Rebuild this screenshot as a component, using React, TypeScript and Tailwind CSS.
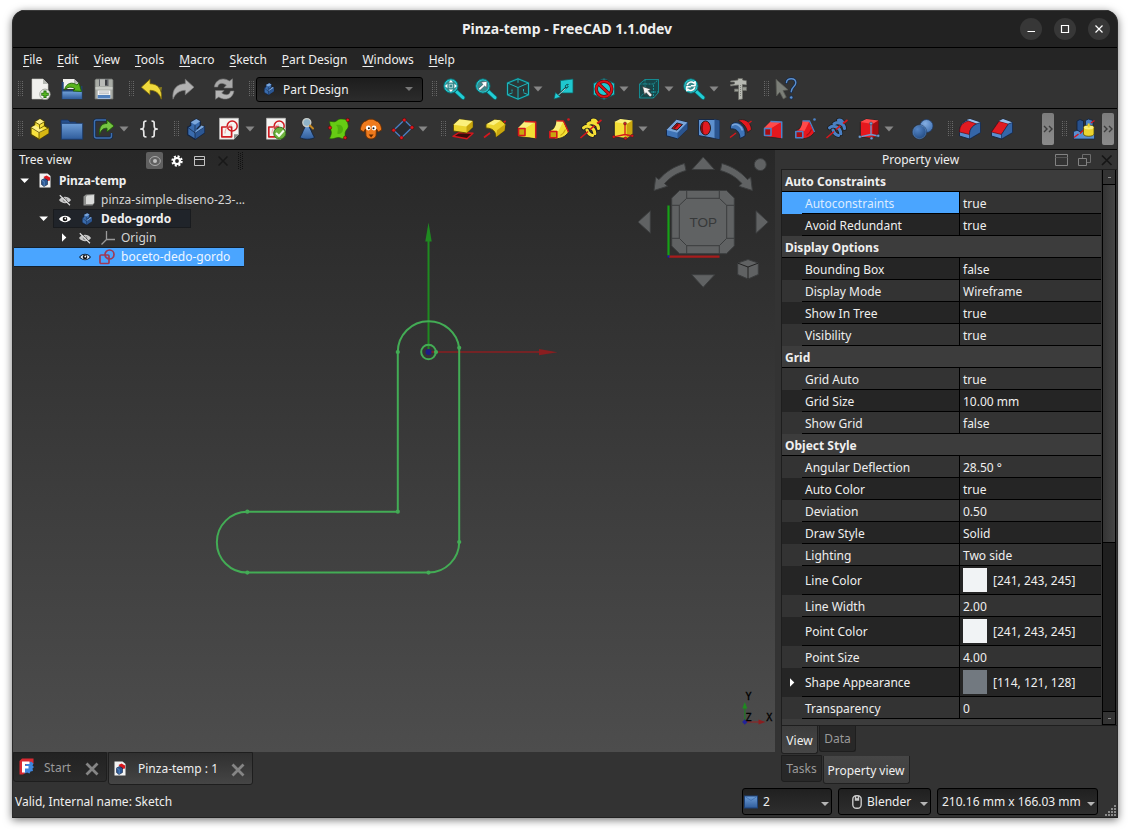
import type { ReactNode } from "react";

const K = "#12233f";

function Svg({ children, size = "size-6" }: { children: ReactNode; size?: string }) {
  return (
    <svg viewBox="0 0 24 24" className={`${size} block shrink-0`} fill="none" strokeLinejoin="round">
      {children}
    </svg>
  );
}

/* ---------- file and edit icons ---------- */

const NewDoc = () => (
  <Svg>
    <path d="M4 2h11l5 5v15H4z" fill="#f1f1ee" stroke="#c9c9c5" strokeWidth=".6" />
    <path d="M15 2l5 5h-5z" fill="#b5b8b2" />
    <circle cx="17" cy="17.3" r="5.2" fill="#eef0ea" stroke="#8d9188" strokeWidth=".8" />
    <path d="M17 13.6v7.4M13.3 17.3h7.4" stroke="#1d6b0a" strokeWidth="3" />
    <path d="M17 14.4v5.8M14.1 17.3h5.8" stroke="#59b823" strokeWidth="1.4" />
  </Svg>
);

const OpenDoc = () => (
  <Svg>
    <path d="M3 2h11l5 4.5V12H3z" fill="#f1f1ee" />
    <path d="M14 2l5 4.500h-5z" fill="#b5b8b2" />
    <path d="M1.700 5h2v8h17.500v-4h1.200v13.200H1.700z" fill="#1f4378" />
    <path d="M2.400 14.500h19.400V22H2.400z" fill="url(#gBlue)" />
    <path d="M4.500 13C6 6 12 4.500 17 8l2-2.200 2.500 8.700-8.500-.6 2-2C11.500 9 7.500 10 4.500 13z" fill="#58b41c" stroke="#1d5c07" strokeWidth=".9" />
  </Svg>
);

const SaveDoc = () => (
  <Svg>
    <path d="M4 2h16l1 1v19H3V3z" fill="#a9aca6" stroke="#6b6d69" strokeWidth=".8" />
    <path d="M7 2.300h9.500V9H7z" fill="#62656a" />
    <path d="M8 2.300h5V9H8z" fill="#b9bbb8" />
    <path d="M13 3h2v5h-2z" fill="#3c3e42" />
    <path d="M3.500 10h17v2.500h-17z" fill="#c9ccc7" />
    <path d="M5.700 13.500h12.600V22H5.700z" fill="#f4f5f6" />
    <path d="M5.700 18h12.600v3.500H5.700z" fill="#5080bd" />
    <path d="M7 15h10M7 16.700h10" stroke="#a2a5a8" strokeWidth=".7" />
  </Svg>
);

const Undo = () => (
  <Svg>
    <path d="M1.300 10.200L10 2.200v4.500c8 .3 12.500 5 11.300 15.500C19.500 16.500 16 13.500 10 13.300v4.500z" fill="#efd93c" stroke="#7d6a0a" strokeWidth=".8" />
    <path d="M18 10.500l4-.5-.6 4z" fill="#8a7d1d" />
  </Svg>
);

const Redo = () => (
  <Svg>
    <path d="M23 10.200L14.300 2.200v4.500C6 7 .8 11.700 2 22.200c2.300-5.700 6.300-8.700 12.300-8.900v4.500z" fill="#b2b2b2" stroke="#7b7b7b" strokeWidth=".7" />
  </Svg>
);

const Refresh = () => (
  <Svg>
    <path d="M2.300 10C3.300 2.500 11-.5 17.500 4L20.500 1.800V11H11.800l2.600-3C10 5.200 6 6.300 5.800 10z" fill="#a9a9a9" stroke="#777" strokeWidth=".6" />
    <path d="M22 14c-1 7.500-8.700 10.500-15.200 6L3.500 22.300V13.500H12l-2.300 2.600c4.300 2.800 8.400 1.600 8.700-2.100z" fill="#b4b4b4" stroke="#777" strokeWidth=".6" />
  </Svg>
);

/* ---------- view icons ---------- */

const CY = "#21ced6";
const CYD = "#0f5f63";

const Lens = ({ children }: { children: ReactNode }) => (
  <Svg>
    <path d="M14.500 14.700l6.500 6" stroke={CYD} strokeWidth="4.400" strokeLinecap="round" />
    <path d="M14.500 14.700l6.500 6" stroke={CY} strokeWidth="3" strokeLinecap="round" />
    <circle cx="8.900" cy="9" r="7.200" fill={CY} stroke={CYD} strokeWidth="1" />
    <circle cx="8.900" cy="9" r="5.700" fill="#3a8a8d" />
    {children}
  </Svg>
);

const ZoomFit = () => (
  <Lens>
    <path d="M8.900 3l2.200 2.500H6.700zM8.900 15l2.200-2.500H6.700zM2.900 9l2.500-2.200v4.400zM14.900 9l-2.500-2.200v4.400z" fill="#fff" />
    <rect x="7.200" y="7.300" width="3.400" height="3.400" stroke="#cfeeee" strokeWidth=".7" />
  </Lens>
);

const ZoomSel = () => (
  <Lens>
    <path d="M13 4.200l-.5 6.500-1.800-1.700-4.800 4.400L4.300 11.700 9 7.400 7 5.300z" fill="#fff" stroke="#334" strokeWidth=".5" />
  </Lens>
);

const ZoomSync = () => (
  <Lens>
    <path d="M5.100 8.200C6.100 4.700 10.100 4.200 11.600 6l1.500-1.300v4H8.900M12.800 10.200c-1 3.500-5 4-6.500 2.200l-1.500 1.300v-4h4" stroke="#fff" strokeWidth="1.500" />
  </Lens>
);

const IsoCube = () => (
  <Svg>
    <path d="M12 1.800L22.500 6v11.800L12 22.200 1.500 17.800V6z" stroke={CYD} strokeWidth="2" fill="#2b3636" />
    <path d="M12 1.800L22.500 6v11.800L12 22.200 1.500 17.800V6zM1.500 6L12 10.500 22.500 6M12 10.500v11.700" stroke="#1fb4bb" strokeWidth="1" />
    <path d="M12 1.800v4M1.500 17.800l5-2M22.500 17.800l-5-2M6 12.500v2M17.500 12v2.500" stroke="#1fb4bb" strokeWidth="1" />
  </Svg>
);

const LinkGo = () => (
  <Svg>
    <path d="M8.500 3.500L21 2v14H8.500z" fill="#1fc8d0" stroke={CYD} strokeWidth=".8" />
    <path d="M16.500 7.500c-2.500-.5-4 1.500-2.500 3.500 2 0 2.500-1.500 1.500-2.500" stroke="#0b3c3f" strokeWidth="1" />
    <path d="M14 10.500L6 18" stroke="#0b3c3f" strokeWidth="1.600" />
    <path d="M13.500 11.500L6 18.500" stroke="#dff" strokeWidth=".8" />
    <path d="M2 22l1.500-6.500 5 4.500z" fill={CY} stroke={CYD} strokeWidth=".7" />
  </Svg>
);

const NoDraw = () => (
  <Svg>
    <path d="M12 1.500L22.500 6.500v11L12 22.500 1.500 17.500v-11z" fill="#1fc8d0" stroke={CYD} strokeWidth="1" />
    <circle cx="12" cy="12" r="7.800" stroke="#5c0a0a" strokeWidth="3.400" />
    <path d="M6.500 6.700l11 10.600" stroke="#5c0a0a" strokeWidth="3.400" />
    <circle cx="12" cy="12" r="7.800" stroke="#d8141b" strokeWidth="2" />
    <path d="M6.500 6.700l11 10.600" stroke="#d8141b" strokeWidth="2" />
  </Svg>
);

const BoxSelect = () => (
  <Svg>
    <path d="M2.500 7L8 2.500h13.500v13L16.500 21h-14z" fill="#17474a" stroke="#158a90" strokeWidth="1" />
    <path d="M2.500 7h14v14M16.500 7l5-4.500M8 2.500V15M8 15h13.500M8 15l-5.500 6" stroke="#1d9aa0" strokeWidth=".9" strokeDasharray="2 1" />
    <path d="M5.500 9.500l8.500 2.700-2.700 1.500 4 4.300-2.200 2-4-4.300-1.400 2.600z" fill="#f3f3f3" stroke="#333" strokeWidth=".7" />
  </Svg>
);

const Caliper = () => (
  <Svg>
    <path d="M2.500 4L10 3V1.500h4.500V3l4 .8V8l-4-.5V22l-4 .8V8L2.500 9V7.500L6.500 7V5L2.500 5z" fill="#b7b9b2" stroke="#6a6c66" strokeWidth=".7" />
    <path d="M14.500 10h4v3.500h-4M10.500 12h-4v2.500h4" fill="#9a9c95" stroke="#6a6c66" strokeWidth=".8" />
    <path d="M12.500 8v12" stroke="#7f817a" strokeWidth="1" strokeDasharray="1 1" />
  </Svg>
);

const WhatsThis = () => (
  <Svg>
    <path d="M2 2.300l12 10.500-5 .8 3.300 6.600-3 1.700-3.500-6.700L2.500 19z" fill="#7c7f78" stroke="#595b56" strokeWidth=".8" />
    <path d="M12.500 5.500c0-5 9.300-5.200 9.300.3 0 4-4.600 4-4.600 9" stroke="#14294a" strokeWidth="2.800" strokeLinecap="round" />
    <path d="M12.500 5.500c0-5 9.300-5.200 9.300.3 0 4-4.600 4-4.600 9" stroke="#5b8fce" strokeWidth="1.400" strokeLinecap="round" />
    <circle cx="17.200" cy="20.500" r="1.700" fill="#5b8fce" stroke="#14294a" strokeWidth=".7" />
  </Svg>
);

/* ---------- structure icons ---------- */

const PartStairs = () => (
  <Svg>
    <path d="M3 10.500L6.500 8.500 7 5l5-3 4.500 2.700v4l4 2.600v5l-9.500 6L3 17.500z" fill="#f7e23c" stroke="#4e4300" strokeWidth="1.200" />
    <path d="M7 5l4.500 2.700L16.500 4.700 12 2zM3 10.500l4-2.300 9 5.300-5 3z" fill="#fdf187" />
    <path d="M11 16l9.500-5v5.300L11 22.300z" fill="#d8b813" />
    <path d="M7 5l4.500 2.700v4l5-3M11.500 7.700l5-3M3 10.500l8 5v6.800M11 15.500l9.500-4.500" stroke="#6b5b00" strokeWidth=".9" />
  </Svg>
);

const Folder = () => (
  <Svg>
    <path d="M1 3h7l2 2h6v4H1z" fill="#27508d" stroke="#173462" strokeWidth=".8" />
    <path d="M1.400 6.300h21.300v16H1.400z" fill="url(#gBlue)" stroke="#1b3a69" strokeWidth=".9" />
  </Svg>
);

const LinkMake = () => (
  <Svg>
    <path d="M14 3H4.500C3 3 2.500 3.500 2.500 5v14c0 1.500.5 2 2 2h13c1.500 0 2-.500 2-2v-3" stroke="#142b4c" strokeWidth="3" />
    <path d="M14 3H4.500C3 3 2.500 3.500 2.500 5v14c0 1.500.5 2 2 2h13c1.500 0 2-.500 2-2v-3" stroke="#3f6fae" strokeWidth="1.400" />
    <path d="M7.500 17.500C7 9 10 6.500 15 6.500V3l7 6-7 6v-3.800c-3.500 0-5.500 1-7.500 6.300z" fill="#76c442" stroke="#1d5c07" strokeWidth=".9" />
  </Svg>
);

const Braces = () => (
  <Svg>
    <path d="M9.500 4C6.500 4 6.800 5 6.800 8s-.3 4-3 4c2.700 0 3 1 3 4s-.3 4 2.700 4M14.500 4c3 0 2.700 1 2.700 4s.3 4 3 4c-2.700 0-3 1-3 4s.3 4-2.700 4" stroke="#e9e9e9" strokeWidth="1.700" />
  </Svg>
);

const Body = ({ size }: { size?: string }) => (
  <Svg size={size}>
    <path d="M3.700 10.300l3-1.800V5.300L12.300 2l4 2.300v4.200L13 12l7.400-2.800v6.600L11 22.300l-7.300-4.500z" fill="#3a6cae" stroke={K} strokeWidth="1.200" />
    <path d="M6.700 5.300L12.300 2l4 2.300L11 7.800z" fill="#7ba7dc" />
    <path d="M11 15.800l9.400-6v6L11 22.300z" fill="#2c5793" />
    <path d="M11 7.800v8l9.400-6M3.700 10.300l7.300 5.500v6.500" stroke={K} strokeWidth=".7" />
    <path d="M11 15l6.500-6.500 2.900 1.300L11 15.800z" fill="#7ba7dc" />
  </Svg>
);

const PageSketch = () => (
  <>
    <path d="M2.500 1.200h19v16l-4.500 5H2.500z" fill="#f4f4f2" stroke="#bcbcbc" strokeWidth=".6" />
    <rect x="4.800" y="10" width="9.800" height="9.800" stroke="#cf1c22" strokeWidth="1.700" />
    <circle cx="15.200" cy="9" r="5" stroke="#cf1c22" strokeWidth="1.500" />
    <path d="M8 16.500C8 11.500 11 8 15 8" stroke="#e99" strokeWidth=".9" />
  </>
);

const Sketch = () => (
  <Svg>
    <PageSketch />
    <path d="M21.500 17.200h-4.500v5z" fill="#8a8d88" />
  </Svg>
);

const SketchValid = () => (
  <Svg>
    <PageSketch />
    <circle cx="15.700" cy="16.200" r="6" fill="#6fb33f" stroke="#2d6d13" strokeWidth=".9" />
    <path d="M12 16l3 3 4.800-5.500" stroke="#f4fff0" strokeWidth="2" />
  </Svg>
);

const CheckGeometry = () => (
  <Svg>
    <path d="M12 7.500c4 3.500 4.500 8.500 7.500 13-3.500 2.300-11 2.300-14.500 0C8 16 8.500 11 12 7.500z" fill="url(#gBlue)" stroke={K} strokeWidth=".8" />
    <circle cx="11.800" cy="5.600" r="4" fill="#8fb3c8" stroke="#c8ccc8" strokeWidth="1.400" />
    <path d="M15 8.500l3 3" stroke="#c5871f" strokeWidth="2" strokeLinecap="round" />
  </Svg>
);

const Binder = () => (
  <Svg>
    <path d="M2.500 4.500C5.500 4 7 6 10 3.500S16 2.500 20.500 2.500C20 7 22.500 9 20.500 11.500s-3.500 4.500-1.500 9.500c-4 2-5-1-8-.5s-6.500 2-8.500 1C4 18 5 16 4 13.500S3.500 9 2.500 4.500z" fill="#66cc14" stroke="#215c00" strokeWidth=".6" />
    <path d="M9 8c3-1 7 0 7 4s-3 5-5 5 2-6-2-9z" fill="#4fb00c" />
    <circle cx="20.700" cy="3" r="1.700" fill="#e01b22" stroke="#400" strokeWidth=".5" />
    <circle cx="3" cy="10.700" r="1.700" fill="#e01b22" stroke="#400" strokeWidth=".5" />
    <circle cx="18.200" cy="20.700" r="1.700" fill="#e01b22" stroke="#400" strokeWidth=".5" />
  </Svg>
);

const Clone = () => (
  <Svg>
    <path d="M7 4C3.500 4.500 1.500 9 1.300 13l3.500 2 1.700-3 .5 7c1.500 4 8.500 4 10 0l.5-7 1.700 3 3.500-2C22.500 9 20.500 4.500 17 4 14.500 1.500 9.500 1.500 7 4z" fill="#ee7a1d" stroke="#6b2f00" strokeWidth=".9" />
    <path d="M9.700 17.500h4.800l-2.400 3z" fill="#5c2600" />
    <circle cx="9.300" cy="11" r="2.400" fill="#fff" />
    <circle cx="15" cy="11" r="2.400" fill="#fff" />
    <circle cx="9.900" cy="11.200" r="1" fill="#111" />
    <circle cx="14.500" cy="11.200" r="1" fill="#111" />
  </Svg>
);

const Datum = () => (
  <Svg>
    <path d="M13.300 3L21 10.500 10.500 20.700 2.700 13.200z" fill="#282b30" stroke="#4a7fc4" strokeWidth="1.300" />
    {[[13.300, 3], [21, 10.500], [10.500, 20.700], [2.700, 13.200]].map(([x, y]) => (
      <circle key={x} cx={x} cy={y} r="1.800" fill="#e2191f" stroke="#500" strokeWidth=".5" />
    ))}
  </Svg>
);

/* ---------- modelling icons ---------- */

const Pad = () => (
  <Svg>
    <path d="M2 19.300l6-3.800 14 .7-6 5.600z" fill="#3a0c0c" stroke="#d4171d" strokeWidth="1.400" />
    <path d="M2.500 7.800L8.500 2.300 21.700 4v6.200L15.500 16 2.500 14z" fill="#ecd42f" stroke="#5a4c00" strokeWidth=".9" />
    <path d="M2.500 7.800L8.500 2.300 21.700 4l-6.200 5.400z" fill="#fbf07c" />
    <path d="M15.500 9.400L21.700 4v6.200L15.500 16z" fill="#c9a60e" />
  </Svg>
);

const Revolve = () => (
  <Svg>
    <path d="M1 20.500L7 16M20 6l2.700-2" stroke="#d4171d" strokeWidth="1.600" />
    <path d="M3 7.500L11.500 2.800 18 3.300 22.300 7 21.500 13.500 13 20C13 14.500 9.500 11 3 11z" fill="#ecd42f" stroke="#5a4c00" strokeWidth=".9" />
    <path d="M3 7.500L11.500 2.800 18 3.300 10.500 8.300C8 7.300 5.500 7 3 7.500z" fill="#fbf07c" />
    <path d="M14 13.200L22.300 7 21.500 13.500 13 20z" fill="#c9a60e" />
  </Svg>
);

type Tone = { a: string; b: string; c: string; line: string };
const ADD: Tone = { a: "#f3de35", b: "#fbf07c", c: "#c9a60e", line: "#d4171d" };
const SUB: Tone = { a: "#e5181e", b: "#ff4a4a", c: "#a90d12", line: "#4c83c8" };
const SUB_COIL: Tone = { ...SUB, a: "#4a80c4" };

const Loft = ({ t }: { t: Tone }) => (
  <Svg>
    <path d="M3 11L9.500 4.500 20.500 5v16.300L11 20.500l-8-1z" fill={t.a} stroke="#222" strokeWidth=".8" />
    <path d="M3 11L9.500 4.500 20.500 5 11 11z" fill={t.b} />
    <path d="M11 11L20.500 5v16.300l-9.500-2z" fill={t.a} />
    <path d="M9.500 4.500L20.700 5v16.300" stroke={t.line} strokeWidth="1.500" />
    <path d="M3.500 11.500h6.500v7H3.500z" fill={t.c} stroke={t.line} strokeWidth="1.600" />
  </Svg>
);

const Pipe = ({ t }: { t: Tone }) => (
  <Svg>
    <path d="M3 13.500C7.500 12 9 8 9.500 3.800l7 .2L21.500 15c-3 5-7.500 6.500-13.500 7z" fill={t.a} stroke="#222" strokeWidth=".9" />
    <path d="M9.500 3.800l7 .2L11.500 14l-5.500-.8C8.500 10.500 9.200 7 9.500 3.800z" fill={t.b} />
    <path d="M9.500 3.800l7 .2L21.500 15" stroke={t.line} strokeWidth="1.300" />
    <path d="M2.800 14.500h7v6.300h-7z" fill={t.c} stroke={t.line} strokeWidth="1.600" />
    <path d="M13.500 18.500c2.500-1.500 4-3.500 5-6" stroke={t.c} strokeWidth="1.200" />
    <circle cx="21.500" cy="2.500" r="1.300" fill={t.line} />
  </Svg>
);

const COIL = "M4.500 10.800C8 7.500 15.500 10 15.800 16.800M9 7C12.500 4 19.500 6.500 19.500 11.500M13.500 3.300c1.500-.5 3 0 4 1.500M8 13c1 3 3 5 5.500 5.500";

const Helix = ({ t, axis }: { t: Tone; axis: string }) => (
  <Svg>
    <path d={COIL} stroke="#1e1e1e" strokeWidth="4.600" strokeLinecap="round" />
    <path d={COIL} stroke={t.a} strokeWidth="3.100" strokeLinecap="round" />
    <path d="M1.500 21L9 14.500M11 12.500l4.500-3.800M18 6.500L22.500 3" stroke={axis} strokeWidth="1.600" />
  </Svg>
);

const Primitive = ({ t, axis }: { t: Tone; axis: string }) => (
  <Svg>
    <path d="M3.300 5L9.300 2l12.200 1.500v13.500L15.700 21.500l-12.400-1.500z" fill={t.a} stroke="#222" strokeWidth=".9" />
    <path d="M3.300 5L9.300 2l12.200 1.500L15.700 7z" fill={t.b} />
    <path d="M15.700 7l5.800-3.500v13.500L15.700 21.500z" fill={t.c} />
    <path d="M14 7v10.500M3 19.800l11-2.300 7 1.500" stroke={axis} strokeWidth="1.300" />
    {[[14, 6.500], [2.800, 19.800], [14.500, 21.300], [21.200, 18.800]].map(([x, y]) => (
      <circle key={x} cx={x} cy={y} r="1.500" fill={axis} stroke="#222" strokeWidth=".4" />
    ))}
  </Svg>
);

const Pocket = () => (
  <Svg>
    <path d="M1.500 13L11.500 2.800 22.500 5.500v6.500L12.500 21.800 1.500 18.800z" fill="#3f74b8" stroke={K} strokeWidth=".9" />
    <path d="M1.500 13L11.500 2.800 22.500 5.500 12.500 15.800z" fill="#7aa5da" />
    <path d="M12.500 15.800L22.500 5.500v6.500L12.500 21.800z" fill="#2b5590" />
    <path d="M6.800 11.500L12 6l5.500 1.500-5.500 5.600z" fill="#e01b22" stroke="#222" strokeWidth="1" />
    <path d="M9 11.500l4-4.300" stroke="#7d0b0f" strokeWidth="1.800" />
  </Svg>
);

const Hole = () => (
  <Svg>
    <path d="M1.500 2.500h16l5 1V22l-5-.5-16-3z" fill="#5d90ce" stroke={K} strokeWidth=".9" />
    <path d="M17.500 2.500l5 1V22l-5-1z" fill="#2b5590" />
    <ellipse cx="8.500" cy="11" rx="5" ry="7" fill="#e01b22" stroke="#222" strokeWidth="1" />
    <path d="M7 4.500c-4 3-4 10 0 13-1.500-4-1.500-9 0-13z" fill="#7d0b0f" />
  </Svg>
);

const Groove = () => (
  <Svg>
    <path d="M1 20.500L7 16" stroke="#d4171d" strokeWidth="1.500" />
    <path d="M9 3.500c6-3 13 1.500 13.500 9l-4 3C17.500 9 13 5.500 9 3.500z" fill="#e5181e" stroke="#222" strokeWidth=".9" />
    <path d="M1.500 9C3 5.500 8 4.500 11.500 7c4 3 5 7 4.500 12l-5 2.500C11 15 7 11 1.500 12z" fill="#3f74b8" stroke={K} strokeWidth=".9" />
    <path d="M3 8.500c4-3 9 0 10.500 5" stroke="#7aa5da" strokeWidth="1.600" />
    <path d="M18 7.500l4.500-3.500" stroke="#d4171d" strokeWidth="1.400" />
  </Svg>
);

const Boolean = () => (
  <Svg>
    <circle cx="15.500" cy="9" r="6.500" fill="url(#gBall)" stroke="#1c3b69" strokeWidth=".7" />
    <circle cx="8.500" cy="15" r="6.800" fill="url(#gBallD)" stroke="#7ba7dc" strokeWidth=".6" />
    <circle cx="8.500" cy="15" r="7.200" stroke="#122848" strokeWidth=".5" />
  </Svg>
);

const Fillet = () => (
  <Svg>
    <path d="M1.500 15.500C1.500 8 4 4.500 12 2l10.500 3.500v10L11.500 22l-10-3z" fill="#5a8fd0" stroke={K} strokeWidth=".9" />
    <path d="M1.500 15c0-6 3-9.500 9-11l9 3c-5 1-8 5-8 10.500z" fill="#e01b22" stroke="#500" strokeWidth=".6" />
    <path d="M9 2.800L12 2l10.500 3.500-3 1.300z" fill="#9cc0ea" />
    <path d="M11.500 17.500C11.500 12 15 7.500 22.500 5.500v10L11.500 22z" fill="#3566a8" stroke={K} strokeWidth=".6" />
  </Svg>
);

const Chamfer = () => (
  <Svg>
    <path d="M1.500 15.500L9 4l4-2 9.500 3.500v10L11.500 22l-10-3z" fill="#5a8fd0" stroke={K} strokeWidth=".9" />
    <path d="M1.500 15L9 4.300l9.500 2.500-7 10.700z" fill="#e01b22" stroke="#500" strokeWidth=".6" />
    <path d="M9 4l4-2 9.500 3.500-4 1.300z" fill="#9cc0ea" />
    <path d="M11.500 17.500l7-10.700 4-1.300v10L11.500 22z" fill="#3566a8" stroke={K} strokeWidth=".6" />
  </Svg>
);

const Pattern = () => (
  <Svg>
    <path d="M1.500 14.500l8-2.500h13v10h-21z" fill="#5a8fd0" stroke={K} strokeWidth=".7" />
    <path d="M5 4l3-1.500L11.500 4v9L8.500 15 5 13z" fill="#27508d" stroke="#101f38" strokeWidth=".8" />
    <path d="M13.500 3.500l3-1.500 4.500 1.500v7l-4 1.500-3.500-1.500z" fill="#4a80c4" stroke={K} strokeWidth=".8" />
    <path d="M19 6l3.500-2.500M2 20.500l4.500-3.500M12 12.500l-4 4" stroke="#d4171d" strokeWidth="1.500" />
    <path d="M11.500 10.500c0-3 10.500-3 10.500 0v6.500c0 3-10.500 3-10.500 0z" fill="#ecd42f" stroke="#5a4c00" strokeWidth=".8" />
    <ellipse cx="16.700" cy="10.500" rx="4.800" ry="1.900" fill="#fbf07c" />
    <path d="M16.700 6.500v4" stroke="#ecd42f" strokeWidth="2" />
  </Svg>
);

/* ---------- toolbar plumbing ---------- */

const Handle = () => (
  <svg viewBox="0 0 6 16" className="block h-4 w-[6px] shrink-0">
    {[0, 2, 4, 6, 8, 10, 12, 14].map((y) => (
      <g key={y} fill="#6a6a6a">
        <rect x="0" y={y} width="1" height="1" />
        <rect x="2" y={y} width="1" height="1" opacity=".5" />
        <rect x="4" y={y} width="1" height="1" />
      </g>
    ))}
  </svg>
);

const Arrow = () => (
  <svg viewBox="0 0 10 6" className="block h-[6px] w-[10px] shrink-0">
    <path d="M.5.500h9L5 5.500z" fill="#868686" />
  </svg>
);

const Chevron = () => (
  <div className="flex h-8 w-3 shrink-0 items-center justify-center rounded-[2px] bg-gradient-to-b from-[#7d7d7d] to-[#8b8b8b]">
    <svg viewBox="0 0 10 8" className="h-2 w-[10px]" fill="none" stroke="#3c3c3c" strokeWidth="1.400">
      <path d="M1 1l3 3-3 3M6 1l3 3-3 3" />
    </svg>
  </div>
);

type Slot = [string, ReactNode];

const FILE_BAR: Slot[] = [
  ["ml-[5px]", <Handle />],
  ["ml-1", <NewDoc />],
  ["ml-2", <OpenDoc />],
  ["ml-2", <SaveDoc />],
  ["ml-[13px]", <Handle />],
  ["ml-[5px]", <Undo />],
  ["ml-[7px]", <Redo />],
  ["ml-[17px]", <Refresh />],
  ["ml-[13px]", <Handle />],
  [
    "ml-[1px]",
    <div className="flex h-[25px] w-[167px] items-center rounded-[3px] border border-black bg-gradient-to-b from-[#1d1d1d] to-[#2c2c2c] pr-[9px] pl-[5px]">
      <Body size="size-[14px]" />
      <span className="ml-[7px] flex-1 pt-[2px]">Part Design</span>
      <svg viewBox="0 0 8 4" className="h-1 w-2">
        <path d="M0 0h8L4 4z" fill="#777" />
      </svg>
    </div>,
  ],
  ["ml-[9px]", <Handle />],
  ["ml-1", <ZoomFit />],
  ["ml-2", <ZoomSel />],
  ["ml-2", <IsoCube />],
  ["ml-[3px]", <Arrow />],
  ["ml-[9px]", <LinkGo />],
  ["ml-4", <NoDraw />],
  ["ml-[3px]", <Arrow />],
  ["ml-2", <BoxSelect />],
  ["ml-[3px]", <Arrow />],
  ["ml-2", <ZoomSync />],
  ["ml-[3px]", <Arrow />],
  ["ml-[9px]", <Caliper />],
  ["ml-3", <Handle />],
  ["ml-1", <WhatsThis />],
];

const MODEL_BAR: Slot[] = [
  ["ml-[5px]", <Handle />],
  ["ml-1", <PartStairs />],
  ["ml-2", <Folder />],
  ["ml-2", <LinkMake />],
  ["ml-[3px]", <Arrow />],
  ["ml-2", <Braces />],
  ["ml-[13px]", <Handle />],
  ["ml-1", <Body />],
  ["ml-[9px]", <Sketch />],
  ["ml-1", <Arrow />],
  ["ml-[9px]", <SketchValid />],
  ["ml-[7px]", <CheckGeometry />],
  ["ml-2", <Binder />],
  ["ml-2", <Clone />],
  ["ml-2", <Datum />],
  ["ml-[3px]", <Arrow />],
  ["ml-[13px]", <Handle />],
  ["ml-1", <Pad />],
  ["ml-2", <Revolve />],
  ["ml-2", <Loft t={ADD} />],
  ["ml-2", <Pipe t={ADD} />],
  ["ml-2", <Helix t={ADD} axis="#d4171d" />],
  ["ml-2", <Primitive t={ADD} axis="#d4171d" />],
  ["ml-[3px]", <Arrow />],
  ["ml-[17px]", <Pocket />],
  ["ml-2", <Hole />],
  ["ml-2", <Groove />],
  ["ml-2", <Loft t={SUB} />],
  ["ml-2", <Pipe t={SUB} />],
  ["ml-2", <Helix t={SUB_COIL} axis="#d4171d" />],
  ["ml-2", <Primitive t={SUB} axis="#6d9bd2" />],
  ["ml-[3px]", <Arrow />],
  ["ml-[17px]", <Boolean />],
  ["ml-[13px]", <Handle />],
  ["ml-1", <Fillet />],
  ["ml-2", <Chamfer />],
  ["ml-7", <Chevron />],
  ["ml-2", <Handle />],
  ["ml-1", <Pattern />],
  ["ml-[6px]", <Chevron />],
];

const Toolbar = ({ slots, height }: { slots: Slot[]; height: string }) => (
  <div className={`flex shrink-0 items-center border-b border-black bg-[#333333] ${height}`}>
    {slots.map(([gap, node], i) => (
      <div key={i} className={`shrink-0 ${gap}`}>
        {node}
      </div>
    ))}
  </div>
);

const MENUS = ["File", "Edit", "View", "Tools", "Macro", "Sketch", "Part Design", "Windows", "Help"];

/* ---------- tree ---------- */

const Eye = ({ off = false, dark = false }: { off?: boolean; dark?: boolean }) => (
  <svg viewBox="0 0 12 12" className="block size-3 shrink-0">
    <path d="M0 6C3 1.800 9 1.800 12 6 9 10.200 3 10.200 0 6z" fill={off ? "#c9c9c9" : dark ? "#10263f" : "#fff"} />
    {dark && <path d="M1.300 6C4 2.900 8 2.900 10.700 6 8 9.100 4 9.100 1.300 6z" fill="#e8f2ff" />}
    <circle cx="6" cy="6" r="2.300" fill={off ? "#8a8a8a" : "#111"} />
    <circle cx="6.300" cy="5.500" r=".9" fill="#fff" />
    {off && <path d="M1.500 .8l10 10" stroke="#2b2b2b" strokeWidth="1" />}
    {off && <path d="M.8 1.300l10.200 10" stroke="#ddd" strokeWidth="1.200" />}
  </svg>
);

const TriDown = () => (
  <svg viewBox="0 0 10 6" className="block h-[6px] w-[10px] shrink-0">
    <path d="M.3.500h8.700L4.600 5z" fill="#fff" />
  </svg>
);

const TriRight = () => (
  <svg viewBox="0 0 5 9" className="block h-[9px] w-[5px] shrink-0">
    <path d="M0 .300L4.300 4.500 0 8.700z" fill="#fff" />
  </svg>
);

const DocIcon = () => (
  <svg viewBox="0 0 12 15" className="block h-[15px] w-3 shrink-0">
    <path d="M.5.500h8L11.500 3v11.500H.5z" fill="#f2f2f2" />
    <path d="M4.500 4L7.500 2.500 11 4.500v3L8 8z" fill="#d8171d" />
    <path d="M2.500 7l3-1.500L8.500 7v4.500l-3.500 2-2.500-2z" fill="#2c5793" stroke={K} strokeWidth=".6" />
    <path d="M2.500 7.300l2.700 1.200V13" stroke="#7ba7dc" strokeWidth=".6" fill="none" />
  </svg>
);

const MeshIcon = () => (
  <svg viewBox="0 0 12 14" className="block h-[14px] w-3 shrink-0">
    <path d="M.5 3.500L3 1.500l8.500-.5v9L9.500 12.500h-9z" fill="#8e8f8d" />
    <path d="M3 4l1-1.500 7-.5v8L9.500 11H3z" fill="#dadbd9" />
  </svg>
);

const TreeView = () => (
  <div className="relative flex w-[231px] flex-col">
    <div className="flex h-[21px] items-center pl-[6px]">
      <span className="w-[127px] pb-[2px]">Tree view</span>
      <span className="flex size-[17px] items-center justify-center rounded-[2px] bg-[#606060]">
        <svg viewBox="0 0 12 12" className="size-3" fill="none">
          <ellipse cx="6" cy="6" rx="5.300" ry="4.500" stroke="#a9a9a9" />
          <circle cx="6" cy="6" r="2" fill="#c0c0c0" />
        </svg>
      </span>
      <svg viewBox="0 0 12 12" className="ml-2 size-3" fill="none">
        <circle cx="6" cy="6" r="4.600" stroke="#fff" strokeWidth="2.200" strokeDasharray="2 1.610" />
        <circle cx="6" cy="6" r="3" stroke="#fff" strokeWidth="2.200" />
      </svg>
      <svg viewBox="0 0 12 12" className="ml-[11px] size-3" fill="none" stroke="#c4c4c4">
        <path d="M.5 1.500h10v9H.5zM.5 4.500h10" />
      </svg>
      <svg viewBox="0 0 10 10" className="ml-[12px] size-[10px]" stroke="#181818" strokeWidth="1.500">
        <path d="M.5.500l9 9M9.500.500l-9 9" />
      </svg>
      <svg viewBox="0 0 6 18" className="ml-[10px] h-[18px] w-[6px] shrink-0" fill="#111">
        {[0, 2, 4, 6, 8, 10, 12, 14, 16].map((y) => (
          <path key={y} d={`M0 ${y}h1v1H0zM2 ${y + 1}h1v1H2zM4 ${y}h1v1H4z`} />
        ))}
      </svg>
    </div>
    <div className="flex h-[19px] items-center pl-[7px] font-bold">
      <TriDown />
      <span className="ml-[9px]"><DocIcon /></span>
      <span className="ml-2">Pinza-temp</span>
    </div>
    <div className="flex h-[19px] items-center pl-[46px] whitespace-nowrap text-[#d4d4d4]">
      <Eye off />
      <span className="ml-3"><MeshIcon /></span>
      <span className="ml-[6px]">pinza-simple-diseno-23-...</span>
    </div>
    <div className="flex h-[19px] items-center pl-[26px] font-bold">
      <TriDown />
      <div className="ml-1 flex h-[19px] w-[138px] items-center border border-[#191b1e] bg-[#20242a] pl-[5px]">
        <Eye />
        <span className="ml-[9px]"><Body size="size-[14px]" /></span>
        <span className="ml-[7px]">Dedo-gordo</span>
      </div>
    </div>
    <div className="flex h-[19px] items-center pl-[49px] text-[#d4d4d4]">
      <TriRight />
      <span className="ml-3"><Eye off /></span>
      <svg viewBox="0 0 14 14" className="ml-[10px] size-[14px]" fill="none" stroke="#9a9a9a" strokeWidth="1.300">
        <path d="M5.500 0v8.500M5.500 8.500H14M5.500 8.500L.5 13.500" />
      </svg>
      <span className="ml-[6px]">Origin</span>
    </div>
    <div className="ml-[1px] flex h-[20px] w-[230px] items-center border-y border-[#14202c] bg-[#4aa5ff] pl-[65px] text-[#eef6ff]">
      <Eye dark />
      <svg viewBox="0 0 16 16" className="ml-2 size-4" fill="none" stroke="#a03a55" strokeWidth="1.700">
        <rect x="1" y="6" width="9" height="8.500" rx="1" />
        <circle cx="10.500" cy="5.500" r="4.500" />
      </svg>
      <span className="ml-[6px]">boceto-dedo-gordo</span>
    </div>
  </div>
);

/* ---------- 3D scene ---------- */

const NAV = { fill: "#606263", stroke: "#3b3d3e", strokeWidth: 1 };
const POINTS = [
  [397.8, 352], [459.2, 347.800], [397.8, 511.700], [247.300, 511.700],
  [247.300, 572.600], [428.500, 572.600], [459.200, 542], [436, 352],
];

const Scene = () => (
  <svg viewBox="13 150 762 602" className="absolute inset-0 h-[602px] w-[762px]" fill="none">
    <path d="M428.500 352V240" stroke="#1f8a20" strokeWidth="2" />
    <path d="M428.500 222.500l3.200 19h-6.400z" fill="#1f8a20" />
    <path d="M431 352h109" stroke="#8a1e20" strokeWidth="1.600" />
    <path d="M557.500 352.300l-18.500-3.200v6.200z" fill="#8a1e20" />
    <circle cx="428.500" cy="352" r="3" fill="#1d1d86" />
    <g stroke="#43ac55" strokeWidth="2">
      <path d="M397.800 511.700V352A30.700 30.800 0 0 1 428.500 321.200A30.700 30.800 0 0 1 459.200 348V542a30.700 30.700 0 0 1-30.700 30.600H247.300a30.450 30.450 0 0 1 0-60.900z" />
      <circle cx="428.500" cy="352" r="7.300" />
    </g>
    {POINTS.map(([x, y]) => (
      <circle key={`${x}-${y}`} cx={x} cy={y} r="2.100" fill="#43ac55" />
    ))}

    <g {...NAV}>
      <path d="M692 169.500h22.500L703.200 157z" />
      <path d="M691.700 274.700h23L703.200 287.300z" />
      <path d="M638 222l12.300-11.300v22.600z" />
      <path d="M768.300 222L756 210.700v22.600z" />
      <circle cx="760.300" cy="164.600" r="6" />
      <path d="M684.500 163.500l1.500 7C677 173 670.500 177 664.500 183.500l3 2.700L654 190.500l1.700-13.300 3.300 2.300C666 171.500 674 166.500 684.500 163.500z" />
      <path d="M721.900 163.500l-1.500 7c9 2.500 15.500 6.500 21.500 13l-3 2.700 13.500 4.300-1.700-13.300-3.300 2.300C740.400 171.500 732.400 166.500 721.900 163.500z" />
      <path d="M679.500 190.500h47l7.800 7.500v48l-7.800 7.700h-47l-7.800-7.700v-48z" />
      <path d="M686.700 198.300h32.600l7.400 7v33l-7.400 7.400h-32.600l-7.400-7.400v-33z" />
      <path d="M686.700 190.500v7.800M719.300 190.500v7.800M686.700 245.700v8M719.300 245.700v8M671.700 205.300h7.600M671.700 238.300h7.600M726.700 205.300h7.600M726.700 238.300h7.600" />
      <path d="M748 259.500l10.300 3.600v11.400L748 279l-10.300-4.500v-11.400z" />
      <path d="M737.700 263.100L748 267l10.300-3.900M748 267v12" stroke="#222" />
    </g>
    <text x="703.200" y="226.800" textAnchor="middle" fontFamily="Liberation Sans, sans-serif" fontSize="13.500" fill="#37393a">
      TOP
    </text>
    <path d="M668.500 205.500v50" stroke="#17a017" strokeWidth="2.200" />
    <path d="M669 256.700h50.500" stroke="#a81c1c" strokeWidth="2.200" />
    <rect x="667.500" y="255.500" width="2" height="2" fill="#1616c0" />

    <path d="M744.800 720v-12" stroke="#2a6d2d" strokeWidth="1.600" />
    <path d="M744.800 702l2.500 6.500h-5z" fill="#1f8a20" />
    <path d="M747 722h12" stroke="#7a3032" strokeWidth="1.600" />
    <path d="M765.500 722l-7-2.500v5z" fill="#8a1e20" />
    <path d="M744.800 719.300l2.700 2.700-2.700 2.700-2.700-2.700z" fill="#22229a" />
    <g fill="#000" stroke="#000" strokeWidth=".3" fontFamily="DejaVu Sans Mono, monospace" fontSize="10" textAnchor="middle">
      <text x="748.500" y="700">Y</text>
      <text x="748.500" y="721">Z</text>
      <text x="769.300" y="721">X</text>
    </g>
  </svg>
);

/* ---------- property editor ---------- */

type Prop = { name: string; value: string; tone: "d" | "l"; swatch?: "w" | "g"; picked?: boolean; open?: boolean };

const GROUPS: { title: string; rows: Prop[] }[] = [
  {
    title: "Auto Constraints",
    rows: [
      { name: "Autoconstraints", value: "true", tone: "l", picked: true },
      { name: "Avoid Redundant", value: "true", tone: "d" },
    ],
  },
  {
    title: "Display Options",
    rows: [
      { name: "Bounding Box", value: "false", tone: "d" },
      { name: "Display Mode", value: "Wireframe", tone: "l" },
      { name: "Show In Tree", value: "true", tone: "d" },
      { name: "Visibility", value: "true", tone: "l" },
    ],
  },
  {
    title: "Grid",
    rows: [
      { name: "Grid Auto", value: "true", tone: "l" },
      { name: "Grid Size", value: "10.00 mm", tone: "d" },
      { name: "Show Grid", value: "false", tone: "l" },
    ],
  },
  {
    title: "Object Style",
    rows: [
      { name: "Angular Deflection", value: "28.50 °", tone: "l" },
      { name: "Auto Color", value: "true", tone: "d" },
      { name: "Deviation", value: "0.50", tone: "l" },
      { name: "Draw Style", value: "Solid", tone: "d" },
      { name: "Lighting", value: "Two side", tone: "l" },
      { name: "Line Color", value: "[241, 243, 245]", tone: "d", swatch: "w" },
      { name: "Line Width", value: "2.00", tone: "l" },
      { name: "Point Color", value: "[241, 243, 245]", tone: "d", swatch: "w" },
      { name: "Point Size", value: "4.00", tone: "l" },
      { name: "Shape Appearance", value: "[114, 121, 128]", tone: "d", swatch: "g", open: true },
      { name: "Transparency", value: "0", tone: "l" },
    ],
  },
];

const PropRow = ({ p }: { p: Prop }) => {
  const bg = p.tone === "d" ? "bg-[#252525]" : "bg-[#333333]";
  return (
    <div className={`flex ${p.swatch ? "h-[29px]" : "h-[22px]"} ${bg}`}>
      <div className={`flex w-5 items-center justify-center ${p.picked ? "bg-[#4aa5ff]" : ""}`}>{p.open && <TriRight />}</div>
      <div
        className={`flex w-[157px] items-center border-b border-black pt-[2px] pl-[3px] ${p.picked ? "bg-[#4aa5ff] text-[#dcebff]" : ""}`}
      >
        {p.name}
      </div>
      <div className="flex flex-1 items-center border-b border-l border-black pl-[3px]">
        {p.swatch && <span className={`mr-[6px] size-6 ${p.swatch === "w" ? "bg-[#f1f3f5]" : "bg-[#727980]"}`} />}
        <span className="pt-[2px]">{p.value}</span>
      </div>
    </div>
  );
};

const PropertyPanel = () => (
  <div className="flex w-[336px] flex-col">
    <div className="flex h-[19px] items-center">
      <span className="flex-1 pl-[101px]">Property view</span>
      <svg viewBox="0 0 60 14" className="h-[14px] w-[60px]" fill="none">
        <path d="M.500 1.500h12v11H.500z" stroke="#828282" />
        <path d="M.500 4.500h12" stroke="#555" />
        <path d="M27.500 1.500h8v8h-8z" stroke="#6d6d6d" />
        <path d="M23.500 5.500h8v7h-8z" stroke="#828282" fill="#333" />
        <path d="M47 2.500l9.500 9.500M56.500 2.500L47 12" stroke="#161616" strokeWidth="1.700" />
      </svg>
      <span className="w-[2px]" />
    </div>
    <div className="flex h-[557px] border border-r-0 border-[#1e1e1e]">
      <div className="flex w-[319px] flex-col bg-[#3c3c3c]">
        {GROUPS.map((g) => (
          <div key={g.title}>
            <div className="flex h-[22px] items-center border-b border-black pt-[2px] pl-[3px] font-bold">{g.title}</div>
            {g.rows.map((p) => (
              <PropRow key={p.name} p={p} />
            ))}
          </div>
        ))}
      </div>
      <div className="ml-[1px] flex w-[14px] flex-col border-x border-black bg-[#1f1f1f]">
        <div className="flex h-[15px] items-center justify-center border-b border-black bg-[#333333]">
          <span className="h-[1px] w-[3px] bg-[#8b8b8b]" />
        </div>
        <div className="h-[358px] border-b border-black bg-gradient-to-r from-[#343434] to-[#454545]" />
        <div className="flex-1" />
        <div className="flex h-[14px] items-center justify-center border-y border-black bg-[#333333]">
          <span className="h-[1px] w-[3px] bg-[#8b8b8b]" />
        </div>
      </div>
    </div>
    <div className="flex h-[29px] items-start">
      <div className="flex h-[28px] w-[37px] items-center justify-center rounded-b-[3px] border border-t-0 border-[#202020] bg-gradient-to-b from-[#3c3c3c] to-[#464646] pt-[2px]">View</div>
      <div className="ml-[1px] flex h-[26px] w-[37px] items-center justify-center rounded-b-[3px] border border-t-0 border-[#1e1e1e] bg-[#282828] text-[#9a9a9a]">Data</div>
    </div>
    <div className="flex h-[31px] items-start">
      <div className="flex h-[27px] w-[41px] items-center justify-center rounded-b-[3px] border border-[#1e1e1e] bg-[#282828] text-[#9a9a9a]">Tasks</div>
      <div className="ml-[1px] mt-[1px] flex h-[28px] w-[87px] items-center justify-center rounded-b-[3px] border border-t-0 border-[#202020] bg-gradient-to-b from-[#464646] to-[#3e3e3e] pt-[2px] pr-[1px]">Property view</div>
    </div>
  </div>
);

/* ---------- document tabs and status bar ---------- */

const TabClose = () => (
  <svg viewBox="0 0 14 14" className="block size-[14px] shrink-0" stroke="#858585" strokeWidth="2.800">
    <path d="M1.500 1.500l11 11M12.500 1.500l-11 11" />
  </svg>
);

const FreeCadLogo = () => (
  <svg viewBox="0 0 15 17" className="block h-[17px] w-[15px] shrink-0">
    <path d="M3 .5h11.500v5L10 9v4L4 16.500H.5V3z" fill="#d92a32" />
    <path d="M6 7l6-3.500 2.500 2-1 2 1.500 1.500-1.500 1.500.5 2.500-2.500.5-1 2-2.500-1-2.500 1V11z" fill="#3d86dd" />
    <path d="M3 3.500h7.500V6H6v2h3.500v2.500H6v4H3z" fill="#fff" />
  </svg>
);

const StatusCombo = ({ children, width }: { children: ReactNode; width: string }) => (
  <div className={`flex h-[27px] items-center rounded-[3px] border border-black bg-gradient-to-b from-[#202020] to-[#2e2e2e] ${width}`}>
    {children}
    <svg viewBox="0 0 8 4" className="mt-1 mr-[2px] ml-auto h-1 w-2 shrink-0">
      <path d="M0 0h8L4 4z" fill="#b5b5b5" />
    </svg>
  </div>
);

const WinButton = ({ children }: { children: ReactNode }) => (
  <span className="flex size-[22px] items-center justify-center rounded-full bg-[#373737]">
    <svg viewBox="0 0 10 10" className="size-[10px]" fill="none" stroke="#fff" strokeWidth="1.200">
      {children}
    </svg>
  </span>
);

export default function App() {
  return (
    <div className="h-[830px] w-[1130px] overflow-hidden bg-white pt-[10px] pl-[12px] font-['Noto_Sans',sans-serif] text-[12px] leading-none text-[#efefef]">
      <svg className="absolute size-0">
        <defs>
          <linearGradient id="gBlue" x1="0" y1="0" x2="0" y2="1">
            <stop offset="0" stopColor="#6f9fd8" />
            <stop offset="1" stopColor="#2f5c9b" />
          </linearGradient>
          <radialGradient id="gBall" cx=".4" cy=".3" r=".8">
            <stop offset="0" stopColor="#84aee2" />
            <stop offset="1" stopColor="#3c6cad" />
          </radialGradient>
          <radialGradient id="gBallD" cx=".35" cy=".3" r=".8">
            <stop offset="0" stopColor="#5586c6" />
            <stop offset="1" stopColor="#204880" />
          </radialGradient>
        </defs>
      </svg>
      <div className="flex h-[808px] w-[1106px] flex-col overflow-hidden rounded-t-[13px] border-x border-[#2a2a2a] bg-[#333333] shadow-[0_2px_8px_rgba(0,0,0,0.55)]">
        <header className="flex h-[38px] shrink-0 items-center border-b border-t border-b-black border-t-[#3a3a3a] bg-[#222222]">
          <h1 className="flex-1 pl-[101px] text-center text-[14px] font-bold">Pinza-temp - FreeCAD 1.1.0dev</h1>
          <div className="mr-[7px] flex gap-3">
            <WinButton><path d="M1.500 7.500h7.500" /></WinButton>
            <WinButton><path d="M1.500 1.500h7v7h-7z" /></WinButton>
            <WinButton><path d="M1.500 1.500l7 7M8.500 1.500l-7 7" /></WinButton>
          </div>
        </header>

        <nav className="flex h-[22px] shrink-0 items-center gap-[15px] bg-[#252525] pt-[2px] pl-[10px]">
          {MENUS.map((m) => (
            <span key={m}>
              <span className="underline decoration-1 underline-offset-[2px]">{m[0]}</span>
              {m.slice(1)}
            </span>
          ))}
        </nav>

        <Toolbar slots={FILE_BAR} height="h-[39px]" />
        <Toolbar slots={MODEL_BAR} height="h-[41px]" />

        <main className="flex h-[636px] shrink-0">
          <div className="flex w-[768px] flex-col">
            <div className="relative h-[602px] w-[762px] bg-gradient-to-b from-[#282828] to-[#4d4d4d]">
              <Scene />
              <TreeView />
            </div>
            <div className="flex h-[34px] items-start">
              <div className="flex h-[30px] w-[94px] items-center rounded-b-[3px] border border-[#1e1e1e] bg-gradient-to-b from-[#222] to-[#2b2b2b] pl-[5px] text-[#9a9a9a]">
                <span className="pb-[2px]"><FreeCadLogo /></span>
                <span className="ml-[10px] flex-1 pt-[2px]">Start</span>
                <span className="mt-[4px] mr-[7px]"><TabClose /></span>
              </div>
              <div className="ml-[1px] flex h-[33px] w-[145px] items-center rounded-b-[3px] border border-[#1e1e1e] bg-gradient-to-b from-[#303030] to-[#454545] pl-[5px]">
                <DocIcon />
                <span className="ml-3 flex-1">Pinza-temp : 1</span>
                <span className="mt-[2px] mr-[7px]"><TabClose /></span>
              </div>
            </div>
          </div>
          <PropertyPanel />
        </main>

        <footer className="flex h-[32px] shrink-0 items-start border-b border-[#222]">
          <span className="mt-[10px] w-[729px] pl-[2px]">Valid, Internal name: Sketch</span>
          <div className="mt-[2px] flex gap-[6px]">
            <StatusCombo width="w-[90px]">
              <svg viewBox="0 0 14 14" className="ml-[1px] size-[14px]">
                <rect x=".5" y="1" width="13" height="12" fill="url(#gBlue)" stroke="#1f4378" />
                <path d="M1 1.500l6 4 6-4" fill="none" stroke="#3f6fae" strokeWidth=".8" />
              </svg>
              <span className="ml-[5px]">2</span>
            </StatusCombo>
            <StatusCombo width="w-[93px]">
              <svg viewBox="0 0 10 14" className="ml-[13px] h-[14px] w-[10px]" fill="none" stroke="#c9c9c9" strokeWidth="1.400">
                <rect x=".8" y=".8" width="8.400" height="12.400" rx="3.500" />
                <path d="M3.500 1v4h3V1M5 3v2.500" />
              </svg>
              <span className="ml-[5px]">Blender</span>
            </StatusCombo>
            <StatusCombo width="w-[161px]">
              <span className="ml-1 whitespace-nowrap">210.16 mm x 166.03 mm</span>
            </StatusCombo>
          </div>
          <svg viewBox="0 0 12 12" className="mt-[19px] ml-auto size-3" fill="#8a8a8a">
            {[0, 1, 2, 3].map((r) =>
              [0, 1, 2, 3].map((c) => (r + c >= 3 ? <rect key={`${r}${c}`} x={c * 3} y={r * 3} width="2" height="2" /> : null)),
            )}
          </svg>
        </footer>
      </div>
    </div>
  );
}
